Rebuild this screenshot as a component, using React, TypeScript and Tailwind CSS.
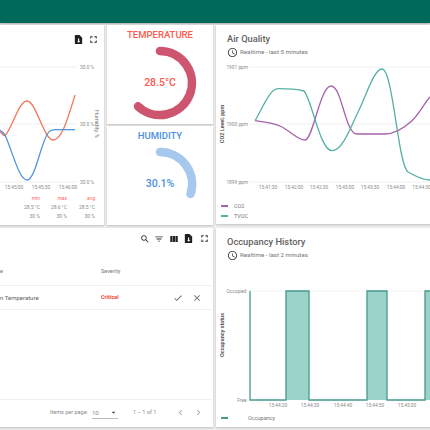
import React from "react";
import {
  MdAccessTime,
  MdArrowDropDown,
  MdCheck,
  MdChevronLeft,
  MdChevronRight,
  MdClose,
  MdFilterList,
  MdFullscreen,
  MdSearch,
  MdViewColumn,
} from "react-icons/md";

const font = { fontFamily: "Roboto, sans-serif" };

const FileIcon = () => (
  <svg viewBox="0 0 24 24" className="h-[11px] w-[11px]" fill="#1f1f1f">
    <path d="M6 2h8l6 6v12a2 2 0 0 1-2 2H6a2 2 0 0 1-2-2V4a2 2 0 0 1 2-2z" />
    <path d="M11 10h2.5v5H16l-3.5 4L9 15h2z" fill="#fff" />
  </svg>
);

const Card = ({ className = "", children }: { className?: string; children?: React.ReactNode }) => (
  <div className={`overflow-hidden bg-white shadow-[0_1px_2px_rgba(0,0,0,0.2)] ${className}`}>{children}</div>
);

const ChartHeader = ({ title, subtitle }: { title: string; subtitle: string }) => (
  <div className="flex h-[35px] flex-col pl-[11px] pt-[8px]">
    <div className="text-[9.3px] font-medium leading-[12px] text-[#616161]">{title}</div>
    <div className="mt-[1px] flex items-center gap-[2px] text-[6.200px] leading-[12px] text-[#757575]">
      <MdAccessTime className="h-[11px] w-[11px] text-[#444]" />
      {subtitle}
    </div>
  </div>
);

const Gauge = ({
  title,
  value,
  color,
  arc,
  arcColor,
  className = "",
}: {
  title: string;
  value: string;
  color: string;
  arc: string;
  arcColor: string;
  className?: string;
}) => (
  <Card className={`flex flex-col items-center ${className}`}>
    <div className="mt-[4px] text-[9.500px] font-medium leading-[12px]" style={{ color }}>
      {title}
    </div>
    <div className="relative mt-[2px] h-[80px] w-[80px]">
      <svg viewBox="0 0 80 80" className="h-full w-full" fill="none">
        <path d={arc} stroke={arcColor} strokeWidth="8.500" strokeLinecap="round" />
      </svg>
      <div className="absolute inset-0 flex items-center justify-center text-[10.5px] font-medium" style={{ color }}>
        {value}
      </div>
    </div>
  </Card>
);

const axis = "#8a8a8a";

const HumidityCard = () => (
  <Card className="h-[200px] w-[254px] shrink-0">
    <div className="flex h-[30px] items-center justify-end gap-[4px] pb-[2px] pr-[5px]">
      <FileIcon />
      <MdFullscreen className="h-[11px] w-[11px] text-[#222]" />
    </div>
    <svg viewBox="-150 55 254 136" className="block h-[136px] w-[254px]" fill="none">
      <path d="M-150 67H77M-150 124H77M-150 182H77" stroke="#ececec" strokeWidth="0.8" />
      <path
        d="M-4 130C0 130 2 135 5 136C13 126 19 101 27 101C36 101 44 140 53 140C62 140 68 118 75 95"
        stroke="#f2765a"
        strokeWidth="1.300"
      />
      <path
        d="M-4 129C0 129 2 131 5 135C12 150 19 180 27 180C36 180 42 135 50 131C52 130 54 129.700 56 129.700H75"
        stroke="#4f94dc"
        strokeWidth="1.300"
      />
      <g fontSize="4.800" fill={axis} fontFamily="Roboto, sans-serif">
        <text x="80" y="68.500">30.0 %</text>
        <text x="80" y="125.500">30.0 %</text>
        <text x="80" y="183.500">30.0 %</text>
        <text x="14" y="189" textAnchor="middle">15:45:00</text>
        <text x="41" y="189" textAnchor="middle">15:45:30</text>
        <text x="68" y="189" textAnchor="middle">15:46:00</text>
      </g>
      <text
        transform="translate(95 124) rotate(90)"
        fontSize="5.500"
        fill="#666"
        textAnchor="middle"
        fontFamily="Roboto, sans-serif"
      >
        Humidity, %
      </text>
    </svg>
    <div className="ml-[150px] mt-[3px] grid grid-cols-[40px_27px_28px] text-right text-[5px] leading-[9px] text-[#8a8a8a]">
      <span className="text-[#ff6b5e]">min</span>
      <span className="text-[#ff6b5e]">max</span>
      <span className="text-[#ff6b5e]">avg</span>
      <span>28.5 °C</span>
      <span>28.6 °C</span>
      <span>28.5 °C</span>
      <span>30 %</span>
      <span>30 %</span>
      <span>30 %</span>
    </div>
  </Card>
);

const AirQualityCard = () => (
  <Card className="h-[199px] w-[240px] shrink-0">
    <ChartHeader title="Air Quality" subtitle="Realtime - last 5 minutes" />
    <svg viewBox="216 60 240 134" className="block h-[134px] w-[240px]" fill="none">
      <path d="M250 67H456M250 124H456M250 182H456" stroke="#ececec" strokeWidth="0.8" />
      <path
        d="M255 120.700C265 122 274 123 281 126.500C290 131 298 140 305 140C313 140 320 86 331 86C342 86 345 134 357 134H385C396 134 405 127 412 120.700C420 113 425 102 430 97"
        stroke="#a663ab"
        strokeWidth="1.300"
      />
      <path
        d="M255 120.700C263 107 270 88.700 278 88.700C288 88.700 298 89.500 304 91C312 100 320 150.700 332 150.700C343 150.700 352 124 359 110C366 96 374 69 382 69C393 69 398 165 408 172C415 176 424 180 430 180"
        stroke="#55b0a3"
        strokeWidth="1.300"
      />
      <g fontSize="4.800" fill={axis} fontFamily="Roboto, sans-serif">
        <text x="248" y="68.500" textAnchor="end">1901 ppm</text>
        <text x="248" y="125.500" textAnchor="end">1900 ppm</text>
        <text x="248" y="183.500" textAnchor="end">1899 ppm</text>
        <text x="268" y="189" textAnchor="middle">15:41:30</text>
        <text x="294" y="189" textAnchor="middle">15:42:00</text>
        <text x="319" y="189" textAnchor="middle">15:42:30</text>
        <text x="345" y="189" textAnchor="middle">15:43:00</text>
        <text x="370" y="189" textAnchor="middle">15:43:30</text>
        <text x="396" y="189" textAnchor="middle">15:44:00</text>
        <text x="421.500" y="189" textAnchor="middle">15:44:30</text>
      </g>
      <text
        transform="translate(224 124) rotate(-90)"
        fontSize="5.500"
        fontWeight="500"
        fill="#444"
        textAnchor="middle"
        fontFamily="Roboto, sans-serif"
      >
        CO2 Level, ppm
      </text>
    </svg>
    <div className="mt-[8px] flex flex-col gap-[1px] pl-[5px] text-[5.500px] leading-[8.500px] text-[#757575]">
      <div className="flex items-center gap-[6px]">
        <span className="h-[2px] w-[7px] bg-[#a663ab]" />
        CO2
      </div>
      <div className="flex items-center gap-[6px]">
        <span className="h-[2px] w-[7px] bg-[#55b0a3]" />
        TVOC
      </div>
    </div>
  </Card>
);

const AlarmsCard = () => (
  <Card className="flex h-[199px] w-[363px] shrink-0 flex-col">
    <div className="flex h-[21px] items-center justify-end gap-[4.500px] pr-[3.500px]">
      <MdSearch className="h-[10px] w-[10px] text-[#333]" />
      <MdFilterList className="h-[10px] w-[10px] text-[#333]" />
      <MdViewColumn className="h-[10px] w-[10px] text-[#222]" />
      <FileIcon />
      <MdFullscreen className="h-[11px] w-[11px] text-[#222]" />
    </div>
    <div className="ml-[150px] mr-[2px] flex flex-1 flex-col text-[5.500px] text-[#757575]">
      <div className="flex h-[37px] items-center border-b border-[#eeeeee] pt-[9px]">
        <span className="w-[101px]">e</span>
        <span>Severity</span>
      </div>
      <div className="flex h-[24px] items-center border-b border-[#eeeeee] text-[#616161]">
        <span className="w-[101px] text-[6px]">n Temperature</span>
        <span className="w-[72px] font-bold text-[#f44336]">Critical</span>
        <MdCheck className="h-[10px] w-[10px] text-[#666]" />
        <MdClose className="ml-[9px] h-[10px] w-[10px] text-[#666]" />
      </div>
      <div className="flex-1 border-b border-[#eeeeee]" />
      <div className="flex h-[27px] items-center pb-[2px] text-[#8a8a8a]">
        <span className="ml-[50px]">Items per page:</span>
        <span className="ml-[4px] flex h-[12px] w-[26px] items-center justify-between border-b border-[#bdbdbd] pt-[1px] text-[6px]">
          10
          <MdArrowDropDown className="h-[9px] w-[9px] text-[#444]" />
        </span>
        <span className="ml-[15px]">1 – 1 of 1</span>
        <MdChevronLeft className="ml-[19px] h-[11px] w-[11px] text-[#aaa]" />
        <MdChevronRight className="ml-[7px] h-[11px] w-[11px] text-[#aaa]" />
      </div>
    </div>
  </Card>
);

const OccupancyCard = () => (
  <Card className="h-[199px] w-[240px] shrink-0">
    <ChartHeader title="Occupancy History" subtitle="Realtime - last 2 minutes" />
    <svg viewBox="216 263 240 148" className="block h-[148px] w-[240px]" fill="none">
      <path d="M250 291H456" stroke="#f0f0f0" strokeWidth="0.8" />
      <path d="M286 291H309V400H286zM367 291H387V400H367zM425 291H456V400H425z" fill="#9bd2c9" />
      <path
        d="M250 291V400H286V291H309V400H367V291H387V400H425V291H456"
        stroke="#46998c"
        strokeWidth="1.300"
      />
      <g fontSize="4.800" fill={axis} fontFamily="Roboto, sans-serif">
        <text x="246.500" y="292.500" textAnchor="end">Occupied</text>
        <text x="246.500" y="401.500" textAnchor="end">Free</text>
        <text x="278" y="407" textAnchor="middle">15:44:20</text>
        <text x="310" y="407" textAnchor="middle">15:44:30</text>
        <text x="343" y="407" textAnchor="middle">15:44:40</text>
        <text x="375" y="407" textAnchor="middle">15:44:50</text>
        <text x="407" y="407" textAnchor="middle">15:45:00</text>
      </g>
      <text
        transform="translate(224 335) rotate(-90)"
        fontSize="5.500"
        fontWeight="500"
        fill="#444"
        textAnchor="middle"
        fontFamily="Roboto, sans-serif"
      >
        Occupancy status
      </text>
    </svg>
    <div className="mt-[3px] flex items-center pl-[5px] text-[5.500px] leading-[8px] text-[#757575]">
      <span className="h-[2px] w-[7px] bg-[#46998c]" />
      <span className="ml-[20px]">Occupancy</span>
    </div>
  </Card>
);

export default function App() {
  return (
    <div className="h-[430px] w-[430px] overflow-hidden bg-[#eeeeee]" style={font}>
      <div className="h-[23px] bg-[#00695c] shadow-[0_1px_2px_rgba(0,0,0,0.3)]" />
      <div className="-ml-[150px] mt-[2px] flex w-[606px] flex-col gap-[3px]">
        <div className="flex gap-[3px]">
          <HumidityCard />
          <div className="flex w-[106px] shrink-0 flex-col gap-[2px]">
            <Gauge
              title="TEMPERATURE"
              value="28.5°C"
              color="#ff5a4f"
              arc="M40 8A32 32 0 1 1 18 63.300"
              arcColor="#cd5570"
              className="h-[99px]"
            />
            <Gauge
              title="HUMIDITY"
              value="30.1%"
              color="#4a90e2"
              arc="M40 8A32 32 0 0 1 70.500 50"
              arcColor="#a6c8ec"
              className="h-[99px]"
            />
          </div>
          <AirQualityCard />
        </div>
        <div className="flex gap-[3px]">
          <AlarmsCard />
          <OccupancyCard />
        </div>
      </div>
    </div>
  );
}
